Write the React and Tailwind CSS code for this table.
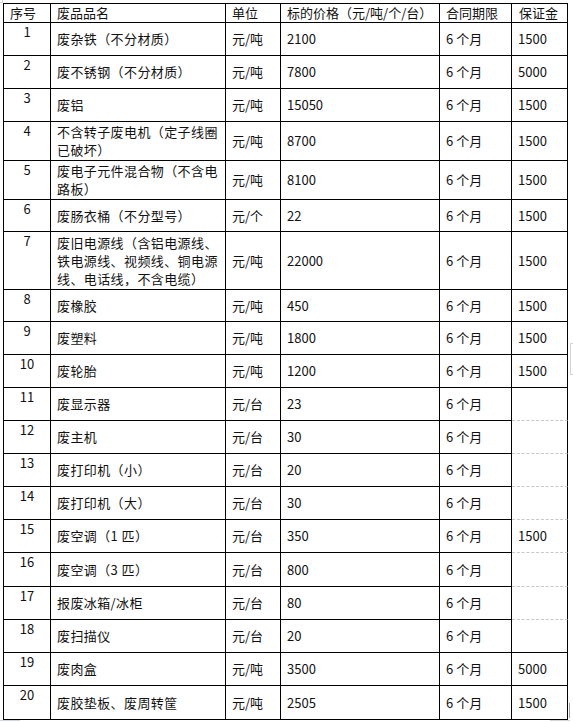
import React from "react";

const rows = [
  { n: "1", name: ["废杂铁（不分材质）"], unit: "元/吨", price: "2100", dep: "1500", h: "h-[33px]" },
  { n: "2", name: ["废不锈钢（不分材质）"], unit: "元/吨", price: "7800", dep: "5000", h: "h-[33px]" },
  { n: "3", name: ["废铝"], unit: "元/吨", price: "15050", dep: "1500", h: "h-[33px]" },
  { n: "4", name: ["不含转子废电机（定子线圈", "已破坏）"], unit: "元/吨", price: "8700", dep: "1500", h: "h-[39px]" },
  { n: "5", name: ["废电子元件混合物（不含电", "路板）"], unit: "元/吨", price: "8100", dep: "1500", h: "h-[39px]" },
  { n: "6", name: ["废肠衣桶（不分型号）"], unit: "元/个", price: "22", dep: "1500", h: "h-[32px]" },
  { n: "7", name: ["废旧电源线（含铝电源线、", "铁电源线、视频线、铜电源", "线、电话线，不含电缆）"], unit: "元/吨", price: "22000", dep: "1500", h: "h-[58px]" },
  { n: "8", name: ["废橡胶"], unit: "元/吨", price: "450", dep: "1500", h: "h-[32px]" },
  { n: "9", name: ["废塑料"], unit: "元/吨", price: "1800", dep: "1500", h: "h-[33px]" },
  { n: "10", name: ["废轮胎"], unit: "元/吨", price: "1200", dep: "1500", h: "h-[33px]" },
  { n: "11", name: ["废显示器"], unit: "元/台", price: "23", dep: "", h: "h-[33px]", dash: true },
  { n: "12", name: ["废主机"], unit: "元/台", price: "30", dep: "", h: "h-[33px]", dash: true },
  { n: "13", name: ["废打印机（小）"], unit: "元/台", price: "20", dep: "", h: "h-[33px]", dash: true },
  { n: "14", name: ["废打印机（大）"], unit: "元/台", price: "30", dep: "", h: "h-[33px]", dash: true },
  { n: "15", name: ["废空调（1 匹）"], unit: "元/台", price: "350", dep: "1500", h: "h-[33px]", dash: true },
  { n: "16", name: ["废空调（3 匹）"], unit: "元/台", price: "800", dep: "", h: "h-[34px]", dash: true },
  { n: "17", name: ["报废冰箱/冰柜"], unit: "元/台", price: "80", dep: "", h: "h-[33px]", dash: true },
  { n: "18", name: ["废扫描仪"], unit: "元/台", price: "20", dep: "", h: "h-[33px]" },
  { n: "19", name: ["废肉盒"], unit: "元/吨", price: "3500", dep: "5000", h: "h-[33px]" },
  { n: "20", name: ["废胶垫板、废周转筐"], unit: "元/吨", price: "2505", dep: "1500", h: "h-[34px]" },
];

const cell = "border-r border-b border-black flex items-center pl-[6px] shrink-0";

export default function App() {
  return (
    <div className="relative w-[573px] h-[722px] bg-white text-[#111] font-['Noto_Sans_CJK_SC','Noto_Sans',sans-serif] text-[13px] leading-[18px] overflow-hidden">
      <div className="absolute left-0 top-0 w-[3px] h-[3px] border-r border-b border-gray-300" />
      <div className="ml-[3px] pt-[3px]">
        <div className="w-[565px] border-l border-t border-black">
          <div className="flex h-[19px]">
            <div className={`${cell} w-[47px]`}>序号</div>
            <div className={`${cell} w-[175px]`}>废品品名</div>
            <div className={`${cell} w-[55px]`}>单位</div>
            <div className={`${cell} w-[159px]`}>标的价格（元/吨/个/台）</div>
            <div className={`${cell} w-[72px]`}>合同期限</div>
            <div className={`${cell} w-[56px] pl-[7px]`}>保证金</div>
          </div>
          {rows.map((r) => (
            <div key={r.n} className={`flex ${r.h}`}>
              <div className="w-[47px] shrink-0 border-r border-b border-black flex justify-center pt-0">
                {r.n}
              </div>
              <div className={`${cell} w-[175px] tracking-[0.4px]`}>
                <div>
                  {r.name.map((l, i) => (
                    <div key={i}>{l}</div>
                  ))}
                </div>
              </div>
              <div className={`${cell} w-[55px]`}>{r.unit}</div>
              <div className={`${cell} w-[159px]`}>{r.price}</div>
              <div className={`${cell} w-[72px]`}>6 个月</div>
              <div
                className={
                  r.dash
                    ? "w-[56px] shrink-0 border-r border-r-black flex items-center pl-[6px] border-b border-b-[#c8c8c8]"
                    : `${cell} w-[56px]`
                }
                style={r.dash ? { borderRightStyle: "solid", borderBottomStyle: "dashed" } : undefined}
              >
                {r.dep}
              </div>
            </div>
          ))}
        </div>
      </div>
      <div className="absolute left-[570px] top-[343px] w-[3px] h-[32px] border-l border-t border-b border-gray-300" />
      <div className="absolute left-[569px] top-[703px] w-px h-[15px] bg-gray-400" />
      <div className="absolute left-0 top-[720px] w-[20px] h-px bg-gray-300" />
      <div className="absolute left-[550px] top-[720px] w-[20px] h-px bg-gray-300" />
    </div>
  );
}
